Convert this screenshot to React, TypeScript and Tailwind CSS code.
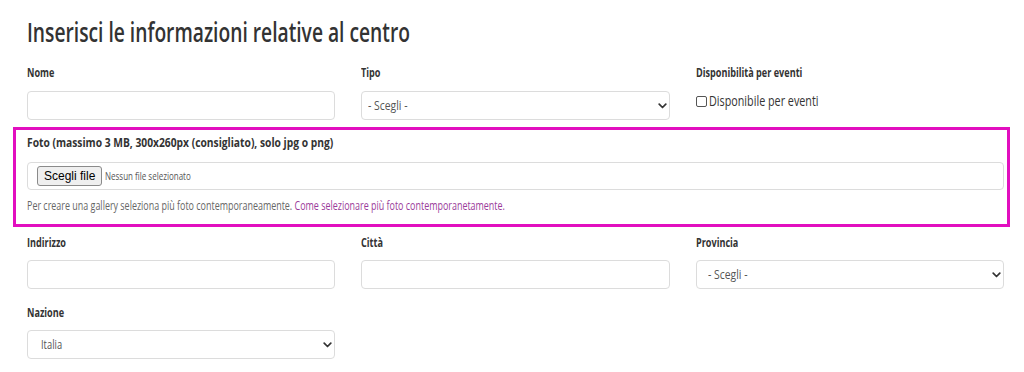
import React from "react";

const FONT = "font-['Open_Sans',sans-serif]";

function Label({ children, narrow = "scale-x-[0.7]" }: { children: React.ReactNode; narrow?: string }) {
  return (
    <div className="text-[13px] leading-[20px] font-bold text-[#333]">
      <span className={`inline-block origin-left whitespace-nowrap ${narrow}`}>{children}</span>
    </div>
  );
}

function TextInput() {
  return <div className="h-[29px] w-full rounded-[4px] border border-[#dcdcdc] bg-white" />;
}

function Chevron() {
  return (
    <svg width="9" height="6" viewBox="0 0 9 6" className="absolute right-[2px] top-1/2 -translate-y-1/2">
      <path d="M1.2 1.2 L4.5 4.5 L7.8 1.2" fill="none" stroke="#333" strokeWidth="1.7" strokeLinecap="round" strokeLinejoin="round" />
    </svg>
  );
}

function Select({ value, pad, narrow }: { value: string; pad: string; narrow: string }) {
  return (
    <div className={`relative flex h-[29px] w-full items-center rounded-[4px] border border-[#dcdcdc] bg-white ${pad}`}>
      <span className={`inline-block origin-left whitespace-nowrap text-[13px] text-[#555] ${narrow}`}>{value}</span>
      <Chevron />
    </div>
  );
}

export default function App() {
  return (
    <div className={`h-[372px] w-[1024px] overflow-hidden bg-white text-[#333] ${FONT}`}>
      <div className="flex flex-col pl-[27px]">
        <h1 className="mt-[15px] text-[27px] leading-[34px] font-semibold text-[#333]">
          <span className="inline-block origin-left scale-x-[0.712] whitespace-nowrap">
            Inserisci le informazioni relative al centro
          </span>
        </h1>

        <div className="mt-[13px] grid w-[977px] grid-cols-3 gap-x-[26px]">
          <div className="flex flex-col gap-[9px]">
            <Label>Nome</Label>
            <TextInput />
          </div>
          <div className="flex flex-col gap-[9px]">
            <Label>Tipo</Label>
            <Select value="- Scegli -" pad="pl-[6px]" narrow="scale-x-[0.8]" />
          </div>
          <div className="flex flex-col gap-[9px]">
            <Label>Disponibilità per eventi</Label>
            <label className="flex items-center text-[14px] leading-[20px] text-[#333]">
              <span className="h-[11px] w-[11px] shrink-0 rounded-[2px] border border-[#555] bg-white" />
              <span className="ml-[2px] inline-block origin-left scale-x-[0.77] whitespace-nowrap">
                Disponibile per eventi
              </span>
            </label>
          </div>
        </div>

        <div className="mt-[7px] ml-[-14px] w-[997px] border-[3px] border-[#e20fbf] pt-[2px] pr-[3px] pb-[10px] pl-[11px]">
          <Label narrow="scale-x-[0.79]">Foto (massimo 3 MB, 300x260px (consigliato), solo jpg o png)</Label>
          <div className="mt-[10px] flex h-[28px] w-full items-center rounded-[4px] border border-[#dcdcdc] bg-white pl-[9px]">
            <span className="flex h-[20px] items-center rounded-[3px] border border-[#8a8a8a] bg-[#efefef] px-[6px] font-['Liberation_Sans',sans-serif] text-[12px] text-black">
              Scegli file
            </span>
            <span className="ml-[3px] inline-block origin-left scale-x-[0.8] whitespace-nowrap text-[10px] text-[#555]">
              Nessun file selezionato
            </span>
          </div>
          <p className="mt-[8px] text-[12px] leading-[16px] text-[#666]">
            <span className="inline-block origin-left scale-x-[0.745] whitespace-nowrap">
              Per creare una gallery seleziona più foto contemporaneamente.{" "}
              <a className="text-[#9a3b9a]">Come selezionare più foto contemporanetamente.</a>
            </span>
          </p>
        </div>

        <div className="mt-[5px] grid w-[977px] grid-cols-3 gap-x-[26px] gap-y-[13px]">
          <div className="flex flex-col gap-[8px]">
            <Label>Indirizzo</Label>
            <TextInput />
          </div>
          <div className="flex flex-col gap-[8px]">
            <Label>Città</Label>
            <TextInput />
          </div>
          <div className="flex flex-col gap-[8px]">
            <Label>Provincia</Label>
            <Select value="- Scegli -" pad="pl-[11px]" narrow="scale-x-[0.8]" />
          </div>
          <div className="flex flex-col gap-[8px]">
            <Label>Nazione</Label>
            <Select value="Italia" pad="pl-[13px]" narrow="scale-x-[0.72]" />
          </div>
        </div>
      </div>
    </div>
  );
}
